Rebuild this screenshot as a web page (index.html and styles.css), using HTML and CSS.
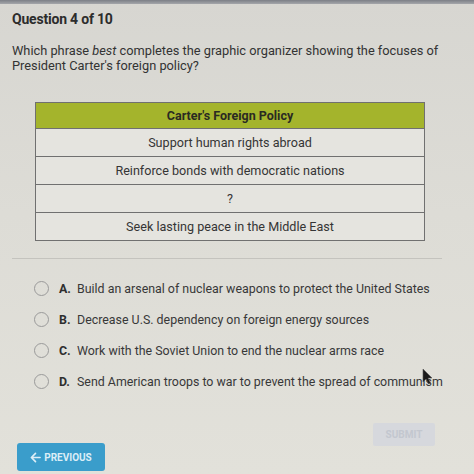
FILE: index.html
```html
<!DOCTYPE html>
<html>
<head>
<meta charset="utf-8">
<link rel="stylesheet" href="styles.css">
</head>
<body>
<div class="page">
  <div class="topbar"></div>
  <div class="content">
    <h1 class="title">Question 4 of 10</h1>
    <p class="question">Which phrase <em>best</em> completes the graphic organizer showing the focuses of<br>President Carter's foreign policy?</p>
    <table class="organizer">
      <tr><th>Carter's Foreign Policy</th></tr>
      <tr><td>Support human rights abroad</td></tr>
      <tr><td>Reinforce bonds with democratic nations</td></tr>
      <tr><td>?</td></tr>
      <tr><td>Seek lasting peace in the Middle East</td></tr>
    </table>
    <div class="divider"></div>
    <ul class="options">
      <li class="option"><span class="radio"></span><span class="letter">A.</span><span class="text">Build an arsenal of nuclear weapons to protect the United States</span></li>
      <li class="option"><span class="radio"></span><span class="letter">B.</span><span class="text">Decrease U.S. dependency on foreign energy sources</span></li>
      <li class="option"><span class="radio"></span><span class="letter">C.</span><span class="text">Work with the Soviet Union to end the nuclear arms race</span></li>
      <li class="option"><span class="radio"></span><span class="letter">D.</span><span class="text">Send American troops to war to prevent the spread of communism</span></li>
    </ul>
  </div>
  <div class="footer">
    <button class="btn-prev"><svg class="arrow" viewBox="0 0 12 12" width="11" height="11"><path d="M11 6H2M6 1.5L1.5 6L6 10.5" fill="none" stroke="currentColor" stroke-width="1.8" stroke-linecap="round" stroke-linejoin="round"/></svg>PREVIOUS</button>
    <button class="btn-submit">SUBMIT</button>
  </div>
  <svg class="cursor" viewBox="0 0 12 17" width="12" height="17"><path d="M1 1V14L4 11L6.5 16L8.5 15L6 10H10Z" fill="#1a1a1a" stroke="#555" stroke-width="0.6"/></svg>
</div>
</body>
</html>
```

FILE: styles.css
```css
* { box-sizing: border-box; }
html, body { margin: 0; padding: 0; }
body {
  width: 474px;
  height: 474px;
  overflow: hidden;
  font-family: Roboto, "Liberation Sans", Arial, sans-serif;
  background: linear-gradient(180deg, #d7d6d1 0%, #dddcd6 45%, #e2e1da 100%);
  color: #383838;
}
.page {
  position: relative;
  width: 474px;
  height: 474px;
}
.topbar {
  height: 4px;
  background: linear-gradient(180deg, #7c7f86, #a4a6aa);
}
.content {
  padding: 0 12px;
}
.title {
  margin: 6px 0 0 0;
  font-size: 14px;
  line-height: 18px;
  font-weight: 700;
  color: #2c2c2c;
  letter-spacing: -0.2px;
}
.question {
  margin: 15px 0 0 0;
  font-size: 12.8px;
  line-height: 15px;
  color: #333333;
  max-width: 450px;
}
.organizer {
  margin: 29px 0 0 23px;
  width: 390px;
  border-collapse: collapse;
  background: #e5e4df;
}
.organizer th,
.organizer td {
  border: 1px solid #707070;
  text-align: center;
  padding: 0;
}
.organizer th {
  height: 26px;
  background: #a4b42c;
  font-size: 12.5px;
  font-weight: 700;
  color: #2a2a22;
}
.organizer td {
  height: 28px;
  font-size: 12.6px;
  color: #353535;
}
.divider {
  margin: 17px 0 0 0;
  width: 430px;
  height: 1px;
  background: #c4c3be;
}
.options {
  list-style: none;
  margin: 14px 0 0 0;
  padding: 0;
}
.option {
  display: flex;
  align-items: center;
  height: 31px;
  font-size: 12.4px;
  color: #383838;
}
.radio {
  width: 15px;
  height: 15px;
  border: 1.5px solid #9a9a9a;
  border-radius: 50%;
  margin-left: 22px;
  flex: none;
}
.letter {
  font-weight: 700;
  margin-left: 10px;
  width: 18px;
  color: #2e2e2e;
}
.text { white-space: nowrap; }
.footer {
  display: flex;
  justify-content: space-between;
  height: 48px;
  margin-top: 26px;
  padding: 0 39px 0 17px;
}
.btn-prev {
  align-self: flex-end;
  display: flex;
  align-items: center;
  justify-content: center;
  gap: 3px;
  width: 88px;
  height: 28px;
  border: none;
  border-radius: 3px;
  background: #3a9dcb;
  color: #dceef7;
  font-family: Roboto, "Liberation Sans", Arial, sans-serif;
  font-size: 10px;
  font-weight: 700;
  padding: 0;
}
.btn-submit {
  align-self: flex-start;
  width: 62px;
  height: 23px;
  border: none;
  border-radius: 2px;
  background: #d6d8dd;
  color: #c3c7cf;
  font-family: Roboto, "Liberation Sans", Arial, sans-serif;
  font-size: 10px;
  font-weight: 700;
  padding: 0;
}
.cursor {
  position: absolute;
  left: 422px;
  top: 368px;
}
```
